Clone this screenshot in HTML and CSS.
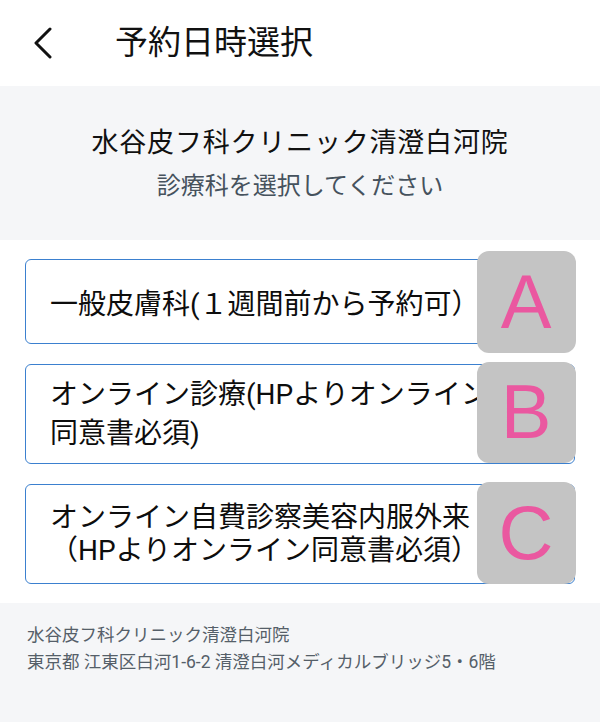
FILE: index.html
```html
<!DOCTYPE html>
<html lang="ja">
<head>
<meta charset="utf-8">
<link rel="stylesheet" href="styles.css">
</head>
<body>
<header class="topbar">
  <svg class="back" width="20" height="32" viewBox="0 0 20 32"><polyline points="17,2 3,16 17,30" fill="none" stroke="#111" stroke-width="3" stroke-linecap="round" stroke-linejoin="round"/></svg>
  <h1 class="title">予約日時選択</h1>
</header>
<section class="intro">
  <div class="clinic">水谷皮フ科クリニック清澄白河院</div>
  <div class="prompt">診療科を選択してください</div>
</section>
<section class="list">
  <div class="card card-one">
    <span class="label">一般皮膚科(１週間前から予約可）</span>
    <div class="tag tag-a">A</div>
  </div>
  <div class="card card-two">
    <span class="label">オンライン診療(HPよりオンライン同意書必須)</span>
    <div class="tag tag-b">B</div>
  </div>
  <div class="card card-three">
    <span class="label">オンライン自費診察美容内服外来（HPよりオンライン同意書必須）</span>
    <div class="tag tag-c">C</div>
  </div>
</section>
<footer class="foot">
  <div>水谷皮フ科クリニック清澄白河院</div>
  <div>東京都 江東区白河1-6-2 清澄白河メディカルブリッジ5・6階</div>
</footer>
</body>
</html>
```
FILE: styles.css
```css
* { box-sizing: border-box; }
html, body { margin: 0; padding: 0; }
body {
  width: 600px;
  height: 722px;
  overflow: hidden;
  background: #fff;
  font-family: Roboto, "Noto Sans CJK JP", sans-serif;
  color: #111;
}
.topbar {
  height: 86px;
  display: flex;
  align-items: center;
  padding-left: 33px;
  background: #fff;
}
.back { display: block; }
.title {
  margin: 0 0 0 62px;
  font-size: 33px;
  font-weight: 400;
  line-height: 40px;
  color: #111;
}
.intro {
  height: 154px;
  background: #f5f6f8;
  display: flex;
  flex-direction: column;
  align-items: center;
  padding-top: 38px;
}
.clinic {
  font-size: 27px;
  line-height: 38px;
  letter-spacing: 0.8px;
  color: #111;
}
.prompt {
  margin-top: 7px;
  font-size: 24px;
  line-height: 34px;
  color: #46525d;
}
.list {
  display: flex;
  flex-direction: column;
  gap: 20px;
  padding: 19px 25px 19px;
  background: #fff;
}
.card {
  position: relative;
  display: flex;
  align-items: center;
  border: 1.5px solid #3b80cf;
  border-radius: 6px;
  padding: 0 83px 0 24px;
  background: #fff;
  font-size: 28px;
  color: #0d0d0d;
}
.card-one { height: 85px; }
.card-two { height: 100px; line-height: 39px; }
.card-three { height: 100px; line-height: 33px; }
.label { display: block; }
.tag {
  position: absolute;
  right: -1.5px;
  width: 99px;
  background: #c4c4c4;
  border-radius: 12px;
  display: flex;
  align-items: center;
  justify-content: center;
  font-family: "Liberation Sans", Arial, sans-serif;
  font-size: 76px;
  line-height: 1;
  color: #ea58a0;
}
.tag-a { top: -9px; height: 102px; }
.tag-b { top: -3.5px; height: 101px; }
.tag-c { top: -3.5px; height: 102px; }
.foot {
  height: 120px;
  background: #f5f6f8;
  padding: 19px 27px 0;
  font-size: 17.5px;
  line-height: 26.5px;
  color: #555f69;
}
```
